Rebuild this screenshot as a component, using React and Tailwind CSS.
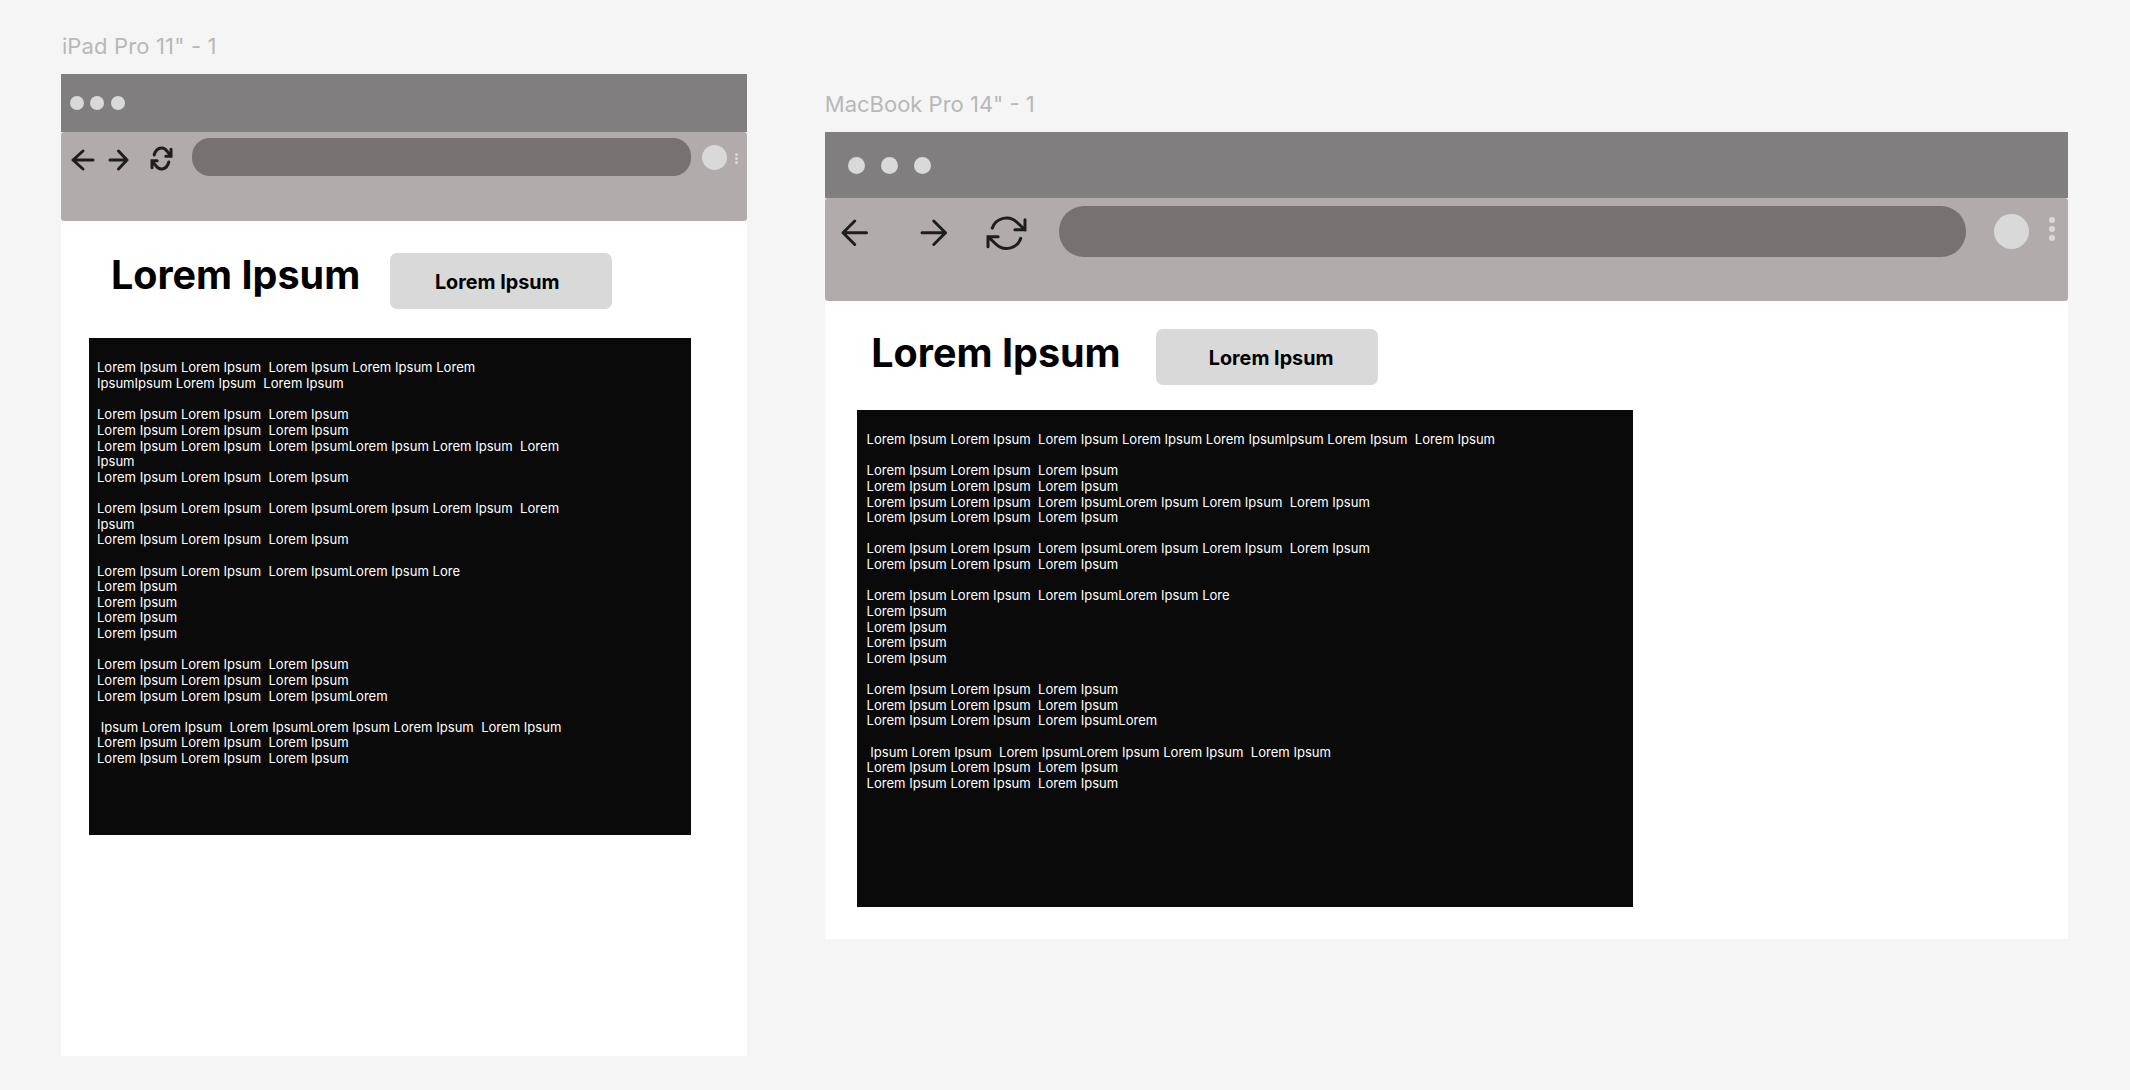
const L = 'Lorem Ipsum Lorem Ipsum  Lorem Ipsum';

const body = [
  '',
  L,
  L,
  L + 'Lorem Ipsum Lorem Ipsum  Lorem Ipsum',
  L,
  '',
  L + 'Lorem Ipsum Lorem Ipsum  Lorem Ipsum',
  L,
  '',
  L + 'Lorem Ipsum Lore',
  'Lorem Ipsum',
  'Lorem Ipsum',
  'Lorem Ipsum',
  'Lorem Ipsum',
  '',
  L,
  L,
  L + 'Lorem',
  '',
  ' Ipsum Lorem Ipsum  Lorem IpsumLorem Ipsum Lorem Ipsum  Lorem Ipsum',
  L,
  L,
];

const tabletText = [L + ' Lorem Ipsum Lorem', 'IpsumIpsum Lorem Ipsum  Lorem Ipsum', ...body].join('\n');
const laptopText = [L + ' Lorem Ipsum Lorem IpsumIpsum Lorem Ipsum  Lorem Ipsum', ...body].join('\n');

function Stroke({ className, viewBox, d, width = 3, join = 'round' }) {
  return (
    <svg className={'block shrink-0 overflow-visible ' + className} viewBox={viewBox} preserveAspectRatio="none" fill="none" stroke="#1e1e1e" strokeWidth={width} strokeLinecap="round" strokeLinejoin={join}>
      <path d={d} vectorEffect="non-scaling-stroke" />
    </svg>
  );
}

const LEFT = 'M14 0H0M7 7L0 0L7 -7';
const RIGHT = 'M0 0H14M7 -7L14 0L7 7';
const REFRESH = 'M23 4V10H17M1 20V14H7M3.51 9A9 9 0 0 1 18.36 5.64L23 10M1 14L5.64 18.36A9 9 0 0 0 20.49 15';

function Dots({ className, dot }) {
  return (
    <div className={'flex ' + className}>
      {[0, 1, 2].map((i) => (
        <span key={i} className={'rounded-full bg-[#d9d9d9] ' + dot} />
      ))}
    </div>
  );
}

function Tablet() {
  return (
    <section className="ml-[61.4px] w-[686px] shrink-0 pt-[32px]">
      <h2 className="h-[42px] pl-[0.5px] text-[22px] leading-[28px] tracking-[0.15px] whitespace-nowrap text-[#b8b8b8]">iPad Pro 11" - 1</h2>
      <div className="h-[981.5px] bg-white">
        <div className="flex h-[58px] items-center bg-[#807e7f] pl-[8.4px]">
          <Dots className="gap-[6.5px]" dot="h-[14px] w-[14px]" />
        </div>
        <div className="flex h-[89.4px] items-start rounded-[3px] bg-[#b2abab] pt-[6px]">
          <Stroke className="mt-[13.3px] ml-[11.8px] h-[18px] w-[20px]" viewBox="0 -7 14 14" d={LEFT} />
          <Stroke className="mt-[13.3px] ml-[17px] h-[18px] w-[17px]" viewBox="0 -7 14 14" d={RIGHT} />
          <Stroke className="mt-[10px] ml-[25px] h-[21px] w-[19px]" viewBox="1 3 22 18" d={REFRESH} join="miter" />
          <div className="ml-[20.4px] h-[37.7px] w-[499.5px] rounded-[18px] bg-[#777271]" />
          <div className="mt-[7px] ml-[11px] h-[25px] w-[25px] rounded-full bg-[#d9d9d9]" />
          <Dots className="mt-[15px] ml-[8px] flex-col gap-px" dot="h-[3px] w-[3px]" />
        </div>
        <div className="flex h-[116.6px] pt-[31.6px] pl-[49px]">
          <h1 className="-mt-[2px] ml-[0.5px] w-[279.5px] shrink-0 text-[39.5px] leading-[48px] font-bold whitespace-nowrap text-black">Lorem Ipsum</h1>
          <button className="h-[56px] w-[222px] shrink-0 rounded-[7px] bg-[#d9d9d9] pt-[2px] pl-[44.5px] text-left text-[19.75px] leading-[54px] font-bold text-black">Lorem Ipsum</button>
        </div>
        <div className="ml-[28px] h-[497.4px] w-[601.8px] bg-[#0a0a0a] pt-[22.5px] pl-[7.6px]">
          <pre className="w-[467px] font-[Inter,sans-serif] text-[13.07px] leading-[15.63px] whitespace-pre-wrap text-white">{tabletText}</pre>
        </div>
      </div>
    </section>
  );
}

function Laptop() {
  return (
    <section className="ml-[77.4px] w-[1243.5px] shrink-0 pt-[90px]">
      <h2 className="h-[42px] text-[22px] leading-[28px] whitespace-nowrap text-[#b8b8b8]">MacBook Pro 14" - 1</h2>
      <div className="h-[807px] bg-white">
        <div className="flex h-[66px] items-center bg-[#807e7f] pl-[23px]">
          <Dots className="gap-[16px]" dot="h-[17px] w-[17px]" />
        </div>
        <div className="flex h-[103px] items-start rounded-[3px] bg-[#b2abab] pt-[8px]">
          <Stroke className="mt-[15px] ml-[18px] h-[23.5px] w-[23.5px]" viewBox="0 -7 14 14" d={LEFT} />
          <Stroke className="mt-[15px] ml-[55.5px] h-[23.5px] w-[23.5px]" viewBox="0 -7 14 14" d={RIGHT} />
          <Stroke className="mt-[11.5px] ml-[42.8px] h-[30.5px] w-[37px]" viewBox="1 3 22 18" d={REFRESH} join="miter" />
          <div className="ml-[33.5px] h-[51px] w-[907px] rounded-[25px] bg-[#777271]" />
          <div className="mt-[8px] ml-[28px] h-[35px] w-[35px] rounded-full bg-[#d9d9d9]" />
          <Dots className="mt-[11px] ml-[20px] flex-col gap-[3.5px]" dot="h-[5.5px] w-[6px]" />
        </div>
        <div className="flex h-[109px] pt-[28px] pl-[46.5px]">
          <h1 className="w-[285px] shrink-0 text-[39.5px] leading-[48px] font-bold whitespace-nowrap text-black">Lorem Ipsum</h1>
          <button className="h-[56px] w-[221.5px] shrink-0 rounded-[7px] bg-[#d9d9d9] pt-[2px] pl-[52.5px] text-left text-[19.75px] leading-[54px] font-bold text-black">Lorem Ipsum</button>
        </div>
        <div className="ml-[32px] h-[497px] w-[776px] bg-[#0a0a0a] pt-[22px] pl-[9.8px]">
          <pre className="w-[700px] font-[Inter,sans-serif] text-[13.07px] leading-[15.63px] whitespace-pre-wrap text-white">{laptopText}</pre>
        </div>
      </div>
    </section>
  );
}

export default function App() {
  return (
    <main className="flex h-[1090px] w-[2130px] items-start overflow-hidden bg-[#f5f5f5] font-[Inter,sans-serif]">
      <Tablet />
      <Laptop />
    </main>
  );
}
